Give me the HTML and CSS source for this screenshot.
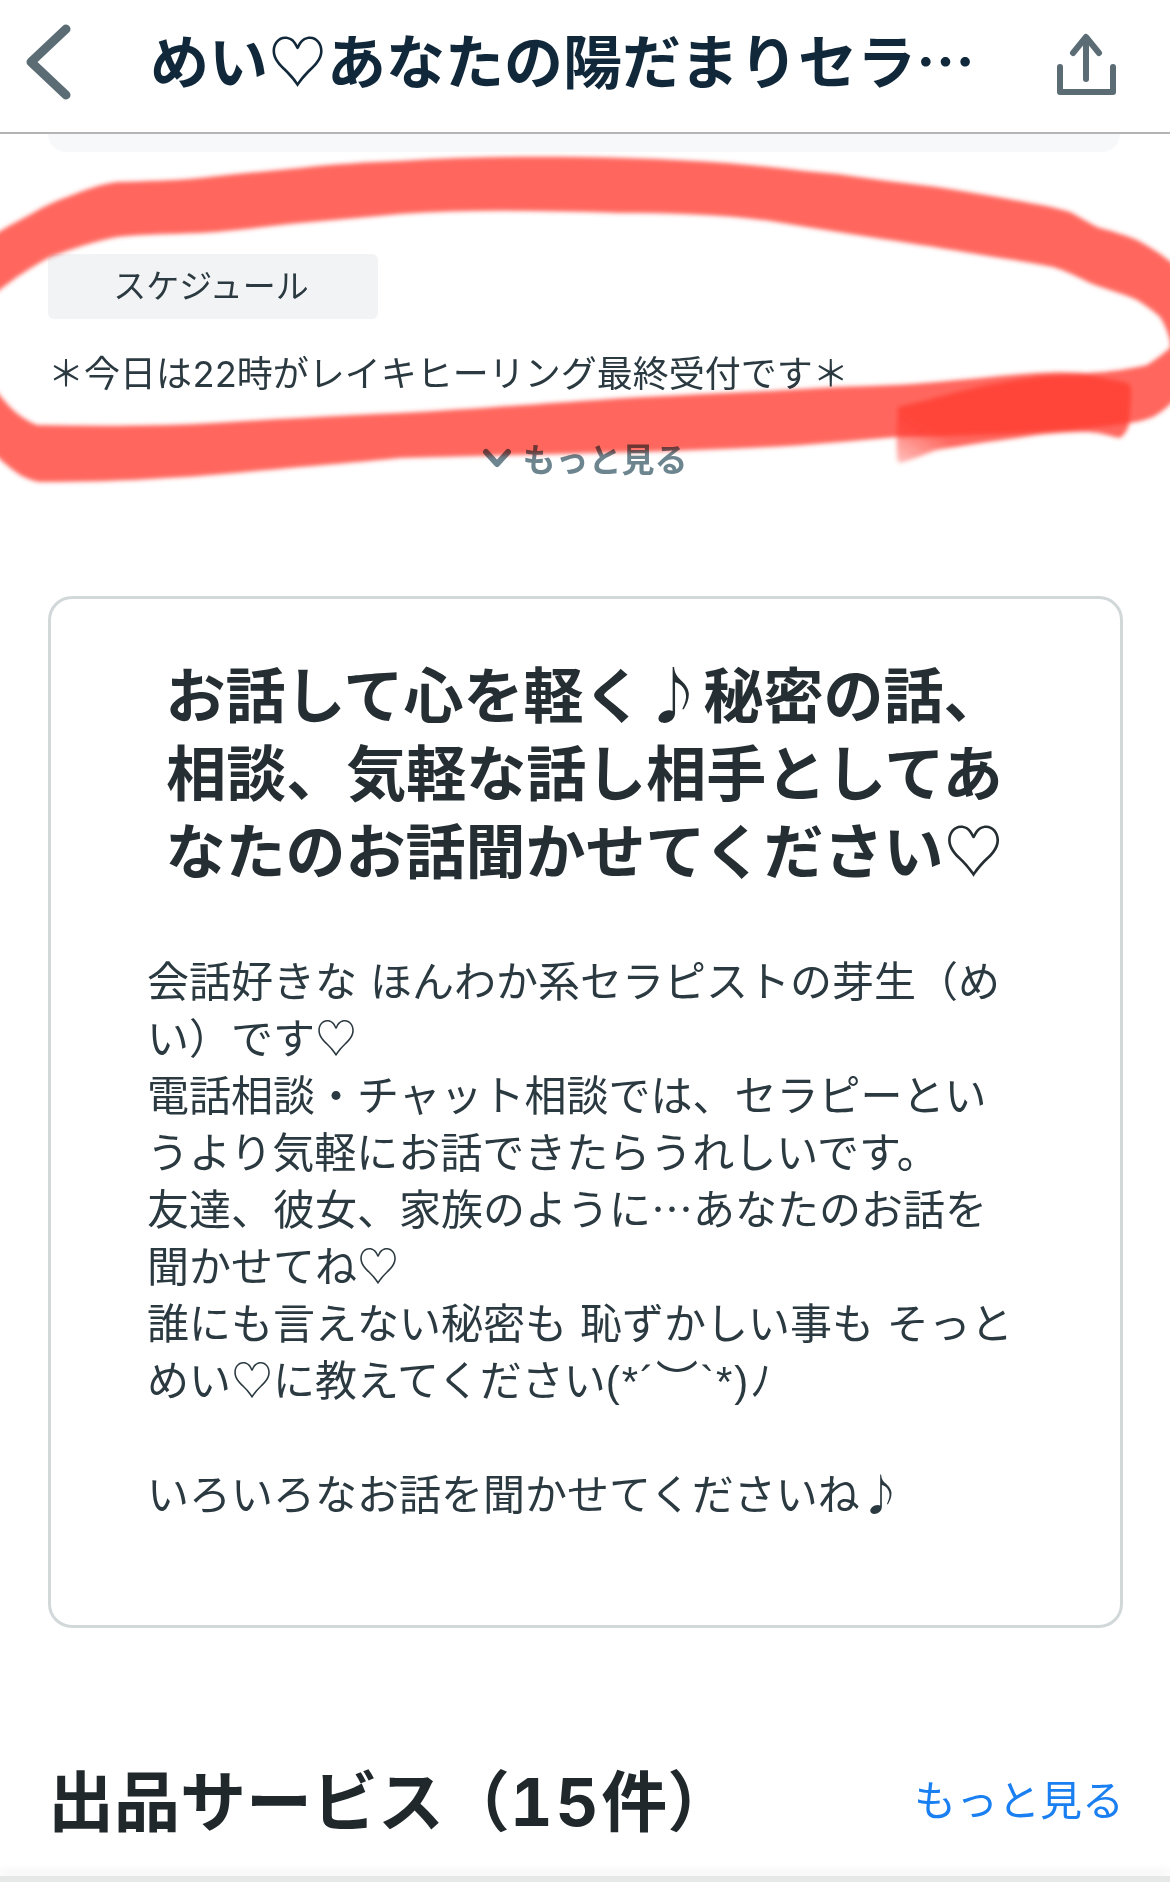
FILE: index.html
```html
<!DOCTYPE html>
<html lang="ja">
<head>
<meta charset="utf-8">
<title>めい♡あなたの陽だまりセラピスト</title>
<link rel="stylesheet" href="styles.css">
</head>
<body>
<div class="page">
  <header class="topbar">
    <svg class="topbar-icon" width="72" height="132" viewBox="0 0 72 132" aria-hidden="true">
      <path class="icon-line" d="M66 29 L31 62 L66 95"/>
    </svg>
    <h1 class="topbar-title">めい♡あなたの陽だまりセラ…</h1>
    <svg class="topbar-icon share" width="72" height="132" viewBox="1050 0 72 132" aria-hidden="true">
      <path class="icon-line thin" d="M1086 79 V38 M1073 53 L1086 37 L1099 53 M1060 67 V92 H1113 V67"/>
    </svg>
  </header>
  <div class="card-tail"></div>

  <section class="schedule">
    <div class="tag">スケジュール</div>
    <p class="schedule-text">＊今日は<span class="num tight">22</span>時がレイキヒーリング最終受付です＊</p>
    <a class="more-toggle">
      <svg width="28" height="20" viewBox="0 0 28 20" aria-hidden="true"><path class="chev" d="M3 4 L14 16 L25 4"/></svg>
      <span>もっと見る</span>
    </a>
  </section>

  <section class="intro-card">
    <h2 class="intro-title">お話して心を軽く♪秘密の話、<br>相談、気軽な話し相手としてあ<br>なたのお話聞かせてください♡</h2>
    <p class="intro-body">会話好きな ほんわか系セラピストの芽生（め<br>い）です♡<br>電話相談・チャット相談では、セラピーとい<br>うより気軽にお話できたらうれしいです。<br>友達、彼女、家族のように…あなたのお話を<br>聞かせてね♡<br>誰にも言えない秘密も 恥ずかしい事も そっと<br>めい♡に教えてください<span class="kao">(*´︶`*)ﾉ</span><br><br>いろいろなお話を聞かせてくださいね♪</p>
  </section>

  <section class="services-head">
    <h2 class="services-title">出品サービス（<span class="num wide">15</span>件）</h2>
    <a class="services-more">もっと見る</a>
  </section>
  <div class="bottom-edge"></div>

  <!-- hand-drawn marker ring around the schedule block -->
  <svg class="marker" width="1170" height="500" viewBox="0 0 1170 500" aria-hidden="true">
    <defs>
      <filter id="soft" x="-2%" y="-5%" width="104%" height="110%"><feGaussianBlur stdDeviation="2"/></filter>
      <linearGradient id="tailFade" gradientUnits="userSpaceOnUse" x1="897" y1="470" x2="925" y2="425">
        <stop offset="0" stop-color="#ff3b30" stop-opacity=".25"/>
        <stop offset="1" stop-color="#ff3b30" stop-opacity=".78"/>
      </linearGradient>
    </defs>
    <g filter="url(#soft)">
      <path class="ink" d="M-8 236 C8 226 20 220 33 213 C45 206 55 201 67 197 C85 190 100 184 117 182 C145 181 172 181 200 178 C235 174 268 171 300 168 C335 164 368 162 400 161 C460 157 520 156 580 157 C650 158 715 161 770 167 C795 170 815 172 837 174 C870 179 905 183 937 187 C960 191 982 194 1003 198 C1028 203 1050 206 1070 212 C1082 218 1090 224 1100 228 C1115 232 1125 235 1137 240 C1150 247 1162 254 1178 268 L1178 396 C1170 405 1162 412 1153 417 C1145 420 1138 422 1130 423 C1090 430 1000 436 897 437 C850 441 810 445 770 447 C650 453 530 454 400 458 C370 461 335 464 300 467 C255 471 210 476 167 478 C125 481 80 482 40 482 C32 481 26 478 20 475 C12 470 5 464 -8 452 L-8 384 C-3 392 4 401 10 407 C18 415 27 421 37 425 C80 426 125 426 167 425 C210 424 255 420 300 418 C335 416 368 414 400 413 C460 410 520 405 597 400 C650 396 710 394 770 391 C790 390 815 388 837 387 C870 386 905 385 937 382 C970 379 1005 375 1037 373 C1055 372 1070 372 1087 373 C1110 372 1130 369 1147 365 C1155 360 1163 354 1170 348 C1171 344 1170 340 1169 337 C1167 330 1164 323 1160 317 C1152 310 1145 305 1137 300 C1122 293 1105 289 1090 283 C1078 277 1066 271 1053 267 C1025 261 998 258 970 253 C935 247 903 242 870 237 C835 232 803 226 770 221 C720 214 670 213 620 213 C545 211 470 209 400 214 C368 217 335 220 300 223 C268 226 235 231 200 233 C172 234 145 234 117 237 C95 241 72 249 50 257 C38 263 28 270 17 277 C10 282 2 288 -8 296 Z"/>
      <path class="tail" d="M898 407 C916 403 935 398 953 393 C980 386 1008 381 1037 377 C1055 375 1070 375 1087 375 C1100 377 1115 380 1128 383 C1130 385 1131 387 1131 390 C1131 402 1130 414 1129 425 C1127 431 1124 435 1120 438 C1110 436 1098 432 1087 432 C1070 432 1055 433 1037 435 C1005 440 970 444 937 450 C925 454 912 460 900 463 C898 462 897 460 897 457 C896 440 897 423 898 407 Z"/>
    </g>
  </svg>
</div>
</body>
</html>
```
FILE: styles.css
```css
* { box-sizing: border-box; }

html, body { margin: 0; padding: 0; background: #fff; }

body {
  font-family: "Noto Sans CJK JP", "Noto Sans", sans-serif;
  color: #2b3940;
}

.page {
  position: relative;
  width: 1170px;
  height: 1904px;
  overflow: hidden;
}

/* top navigation */
.topbar {
  height: 134px;
  display: flex;
  align-items: center;
  border-bottom: 2px solid #b4b4b4;
}

.topbar-icon { flex: none; }

.topbar-icon.share { margin-right: 48px; }

.topbar-title {
  flex: 1;
  margin: 0;
  padding: 0 0 14px 3px;
  font-size: 59px;
  font-weight: 700;
  line-height: 118px;
  color: #10283a;
  white-space: nowrap;
  text-align: center;
  overflow: hidden;
}

.icon-line {
  fill: none;
  stroke: #5b6c75;
  stroke-width: 9;
  stroke-linecap: round;
  stroke-linejoin: round;
}

.icon-line.thin { stroke-width: 6; }

.card-tail {
  height: 18px;
  margin: 0 50px 0 48px;
  background: #f7f8fa;
  border-radius: 0 0 20px 20px;
}

/* schedule block */
.schedule {
  height: 444px;
  padding: 102px 48px 0;
}

.tag {
  display: flex;
  align-items: center;
  justify-content: center;
  width: 330px;
  height: 65px;
  padding: 0 4px 5px 0;
  font-size: 33px;
  background: #f2f3f5;
  border-radius: 6px;
}

.schedule-text {
  margin: 26px 0 0;
  font-size: 36px;
  line-height: 52px;
  white-space: nowrap;
}

.num {
  font-family: Inter, "Noto Sans CJK JP", sans-serif;
  font-variant-numeric: tabular-nums;
  line-height: 1;
}

.num.tight { letter-spacing: -1px; }

.num.wide { letter-spacing: 3px; }

.more-toggle {
  display: flex;
  align-items: center;
  justify-content: center;
  gap: 12px;
  margin-top: 37px;
  font-size: 33px;
  font-weight: 700;
  line-height: 48px;
  color: #6d858f;
}

.chev {
  fill: none;
  stroke: #6d858f;
  stroke-width: 6;
  stroke-linecap: round;
  stroke-linejoin: round;
}

/* introduction card */
.intro-card {
  width: 1075px;
  height: 1032px;
  margin-left: 48px;
  padding: 54px 98px 0 96px;
  border: 3px solid #d2d8da;
  border-radius: 24px;
}

.intro-title {
  margin: 0;
  font-size: 60px;
  font-weight: 700;
  line-height: 78px;
  color: #252e33;
  text-align: center;
  white-space: nowrap;
}

.intro-body {
  margin: 63px 0 0;
  font-size: 42px;
  line-height: 57px;
  word-spacing: 3.5px;
  white-space: nowrap;
}

.kao {
  font-family: "Liberation Sans", "Noto Sans CJK JP", sans-serif;
  line-height: 1;
  letter-spacing: 2px;
}

/* services heading */
.services-head {
  display: flex;
  align-items: center;
  justify-content: space-between;
  height: 100px;
  margin-top: 119px;
  padding: 0 46px 0 48px;
}

.services-title {
  margin: 0;
  font-size: 66px;
  font-weight: 700;
  color: #20282c;
  white-space: nowrap;
}

.services-more {
  font-size: 42px;
  color: #1a7ff0;
}

.bottom-edge {
  height: 6px;
  margin-top: 29px;
  background: #e6e8e8;
  box-shadow: 0 -6px 8px rgba(0, 0, 0, .05);
}

/* marker overlay */
.marker {
  position: absolute;
  left: 0;
  top: 0;
  pointer-events: none;
  mix-blend-mode: multiply;
}

.ink { fill: rgba(255, 59, 48, .78); }

.tail { fill: url(#tailFade); }
```
